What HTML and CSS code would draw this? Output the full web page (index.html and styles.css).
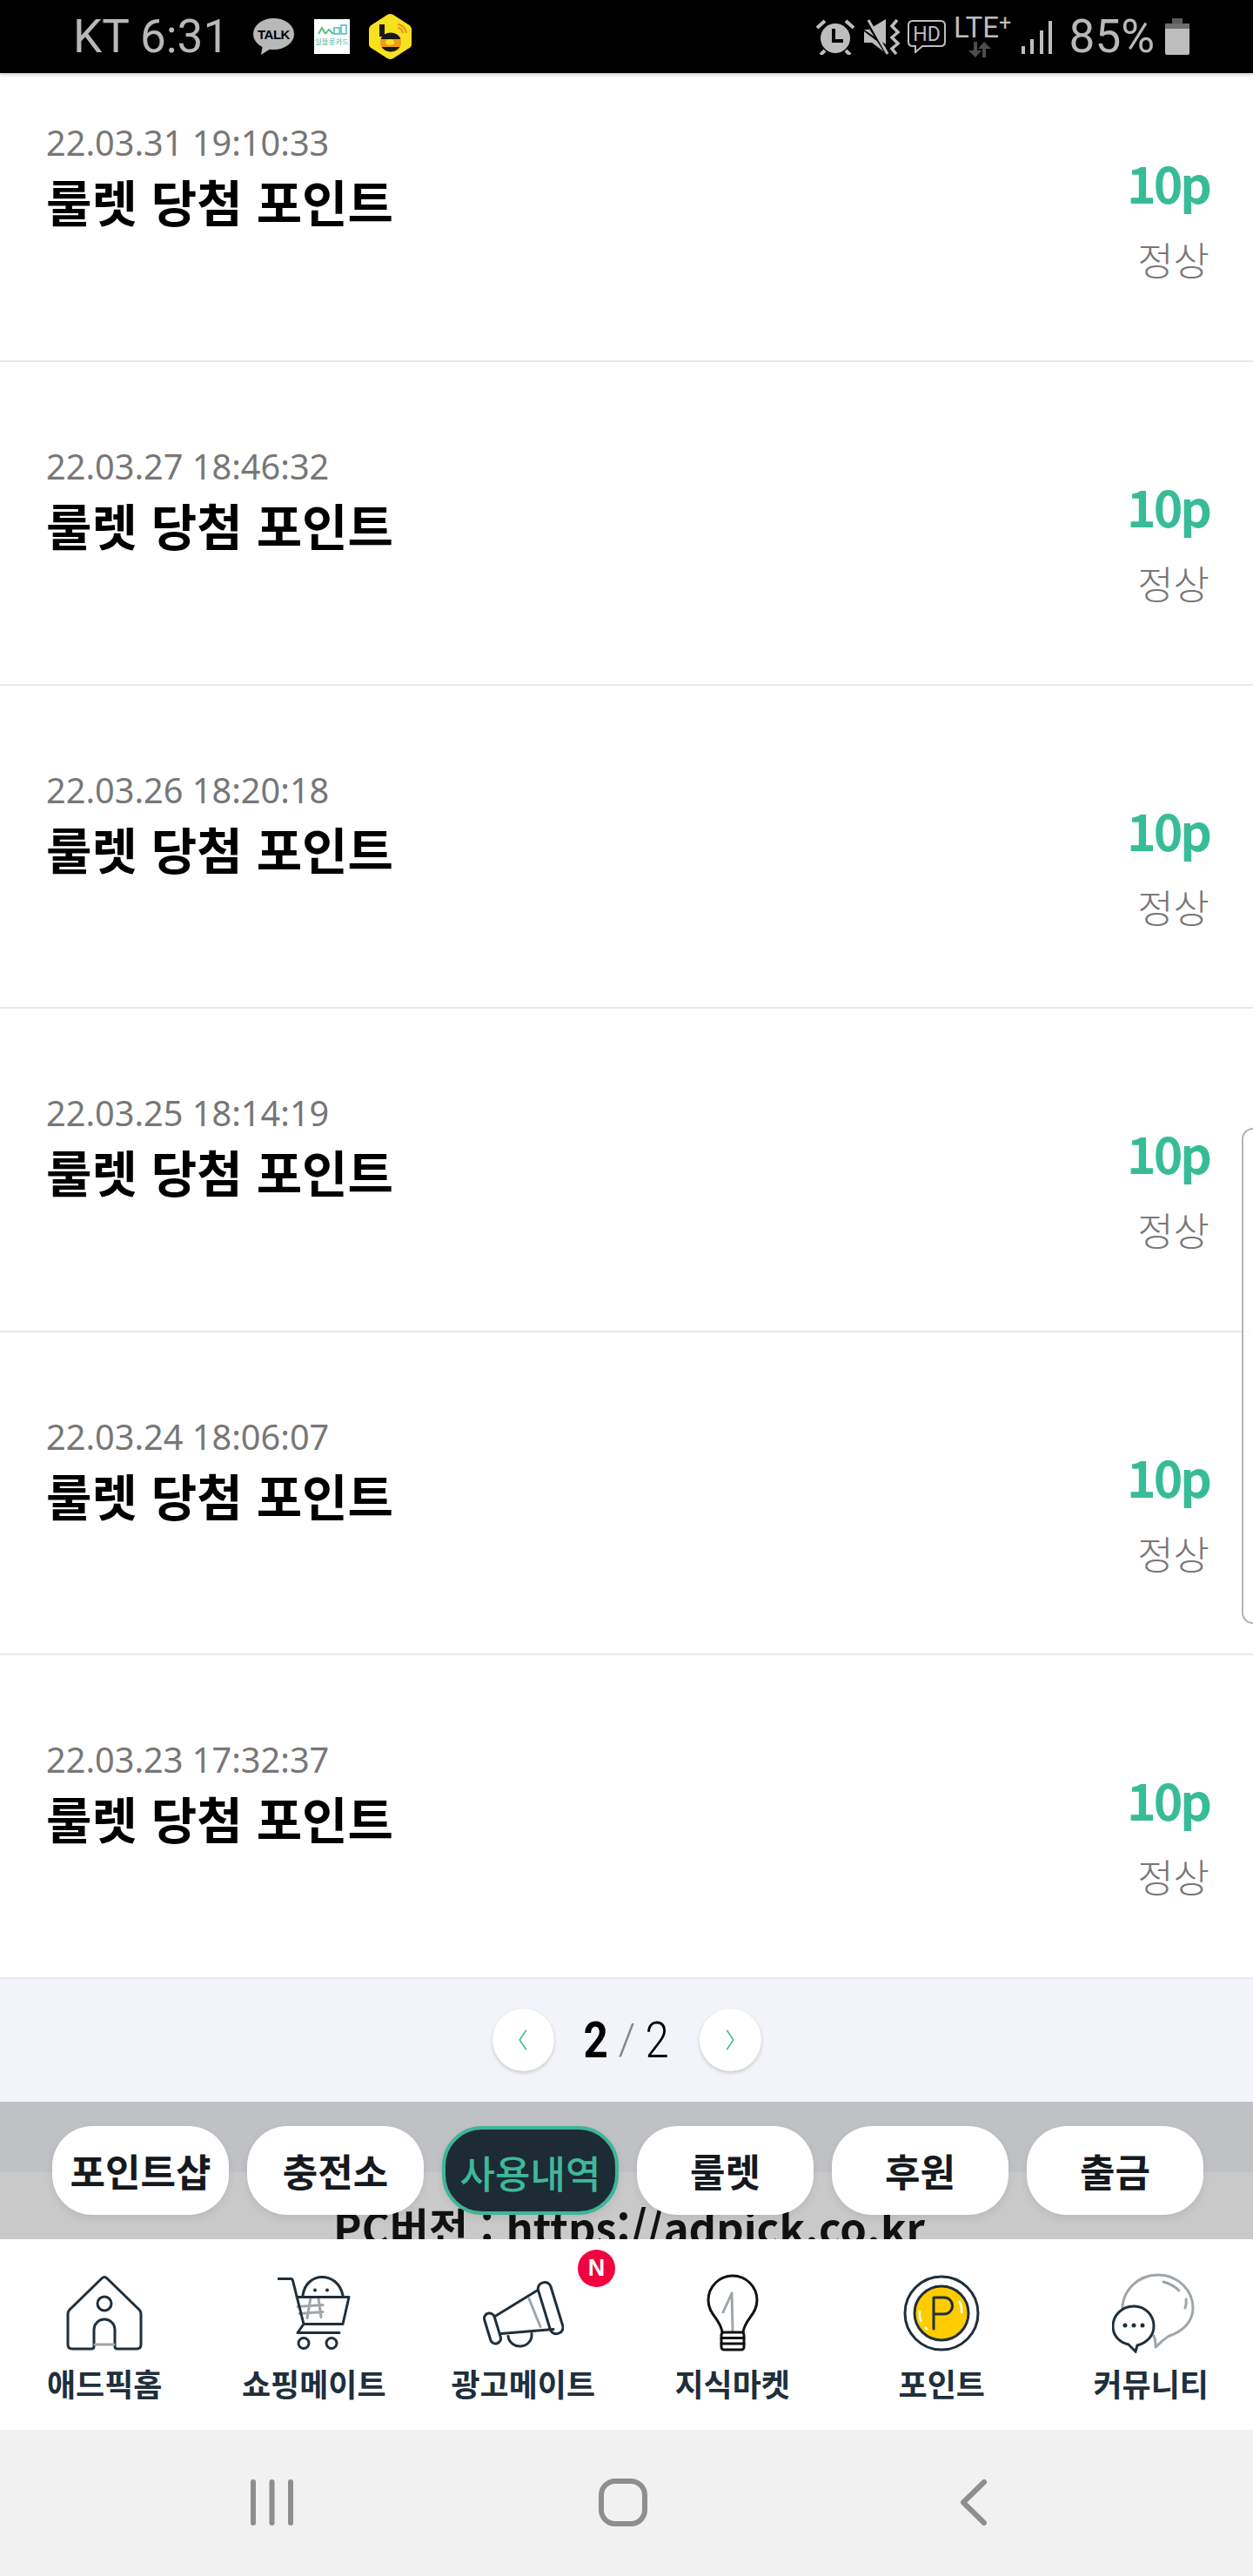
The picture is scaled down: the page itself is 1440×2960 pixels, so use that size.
FILE: index.html
```html
<!DOCTYPE html>
<html lang="ko">
<head>
    <meta charset="UTF-8">
    <meta name="viewport" content="width=device-width, initial-scale=1.0">
    <title>포인트 사용내역</title>
    <link rel="stylesheet" href="styles.css">
</head>
<body>
<div class="screen">

    <!-- 상태바 -->
    <div class="status-bar">
        <div class="status-left">
            <span class="status-text">KT 6:31</span>
            <svg class="ic-talk" viewBox="0 0 47 42" width="47" height="42">
                <ellipse cx="23.5" cy="18" rx="23.5" ry="18" fill="#b8b8b8"/>
                <path d="M11 30 L9 42 L23 33Z" fill="#b8b8b8"/>
                <text x="23.5" y="24" class="talk-text">TALK</text>
            </svg>
            <svg class="ic-card" viewBox="0 0 41 40" width="41" height="40">
                <rect width="41" height="40" fill="#fff"/>
                <path d="M5 17 L9 10 L13 17 M13 17 L17 12 L22 17" fill="none" stroke="#5cbf7d" stroke-width="2"/>
                <rect x="23" y="10" width="6" height="7" fill="none" stroke="#4cb7c4" stroke-width="1.5"/>
                <rect x="31" y="7" width="6" height="10" fill="none" stroke="#4cb7c4" stroke-width="1.5"/>
                <text x="20.5" y="29" class="card-text">일뜰콩카드</text>
            </svg>
            <svg class="ic-bee" viewBox="0 0 49 54" width="49" height="54">
                <path d="M24.5 1 Q26 1 28 2 L45 13 Q49 15 49 19 V36 Q49 39 45 41 L28 52 Q24.5 54 21 52 L4 41 Q0 39 0 36 V19 Q0 15 4 13 L21 2 Q23 1 24.5 1Z" fill="#f8e11f"/>
                <rect x="12" y="13" width="6" height="14" fill="#1a1a1a"/>
                <ellipse cx="25" cy="34" rx="12" ry="10.500" fill="#f09a1c"/>
                <path d="M13.500 30 A12 10.500 0 0 1 36.500 30Z M14.500 39 A12 10.500 0 0 0 35.500 39Z" fill="#1a1a1a"/>
                <ellipse cx="24" cy="33.500" rx="5" ry="3.500" fill="#f8e11f"/>
                <path d="M33 17 A7 7 0 0 1 39 23 M33 13 A11 11 0 0 1 43 23" fill="none" stroke="#ef8a1e" stroke-width="2"/>
            </svg>
        </div>
        <div class="status-right">
            <svg class="ic-alarm" viewBox="0 0 46 42" width="46" height="42">
                <circle cx="23" cy="23" r="17" fill="#bdbdbd"/>
                <path d="M2 11 L11 3 M44 11 L35 3 M11 37 L6 42 M35 37 L40 42" stroke="#bdbdbd" stroke-width="4"/>
                <path d="M21 12 V26 H32" fill="none" stroke="#000" stroke-width="4"/>
            </svg>
            <svg class="ic-mute" viewBox="0 0 42 42" width="42" height="42">
                <path d="M0 13 H5 L25 1 V30Z M0 15 V28 H9 L25 40 V34Z" fill="#bdbdbd"/>
                <path d="M2 3 L26 41" stroke="#000" stroke-width="3"/>
                <path d="M5 2 L27 41" stroke="#bdbdbd" stroke-width="3"/>
                <path d="M38 2 L32 9 L39 16 L32 22 L39 29 L32 35 L37 41" fill="none" stroke="#bdbdbd" stroke-width="3.5"/>
            </svg>
            <svg class="ic-hd" viewBox="0 0 44 38" width="44" height="38">
                <path d="M6 1 H38 Q43 1 43 6 V25 Q43 30 38 30 H17 L9 37 V30 H6 Q1 30 1 25 V6 Q1 1 6 1Z" fill="none" stroke="#bdbdbd" stroke-width="2"/>
                <text x="22" y="24" class="hd-text">HD</text>
            </svg>
            <div class="lte">
                <span class="lte-text">LTE<i>+</i></span>
                <svg viewBox="0 0 26 18" width="26" height="18">
                    <path d="M6 0 H10 V10 H15 L8 18 L0 10 H6Z" fill="#4c4c4c"/>
                    <path d="M16 18 H20 V8 H26 L18 0 L11 8 H16Z" fill="#4c4c4c"/>
                </svg>
            </div>
            <svg class="ic-signal" viewBox="0 0 35 39" width="35" height="39">
                <path d="M2 30 V39 M12 22 V39 M23 12 V39 M33 1 V39" stroke="#bdbdbd" stroke-width="4"/>
            </svg>
            <span class="status-text status-pct">85%</span>
            <svg class="ic-battery" viewBox="0 0 28 42" width="28" height="42">
                <path d="M8 0 H20 V6 H8Z" fill="#5a5a5a"/>
                <rect y="6" width="28" height="6" fill="#6e6e6e"/>
                <path d="M0 12 H28 V40 Q28 42 26 42 H2 Q0 42 0 40Z" fill="#bdbdbd"/>
            </svg>
        </div>
    </div>

    <!-- 포인트 내역 -->
    <ul class="history">
        <li class="row row-first">
            <div class="row-info"><p class="row-date">22.03.31 19:10:33</p><p class="row-title">룰렛 당첨 포인트</p></div>
            <div class="row-side"><p class="row-point">10p</p><p class="row-state">정상</p></div>
        </li>
        <li class="row">
            <div class="row-info"><p class="row-date">22.03.27 18:46:32</p><p class="row-title">룰렛 당첨 포인트</p></div>
            <div class="row-side"><p class="row-point">10p</p><p class="row-state">정상</p></div>
        </li>
        <li class="row">
            <div class="row-info"><p class="row-date">22.03.26 18:20:18</p><p class="row-title">룰렛 당첨 포인트</p></div>
            <div class="row-side"><p class="row-point">10p</p><p class="row-state">정상</p></div>
        </li>
        <li class="row">
            <div class="row-info"><p class="row-date">22.03.25 18:14:19</p><p class="row-title">룰렛 당첨 포인트</p></div>
            <div class="row-side"><p class="row-point">10p</p><p class="row-state">정상</p></div>
        </li>
        <li class="row">
            <div class="row-info"><p class="row-date">22.03.24 18:06:07</p><p class="row-title">룰렛 당첨 포인트</p></div>
            <div class="row-side"><p class="row-point">10p</p><p class="row-state">정상</p></div>
        </li>
        <li class="row">
            <div class="row-info"><p class="row-date">22.03.23 17:32:37</p><p class="row-title">룰렛 당첨 포인트</p></div>
            <div class="row-side"><p class="row-point">10p</p><p class="row-state">정상</p></div>
        </li>
    </ul>

    <!-- 페이지 이동 -->
    <div class="pager">
        <a class="pager-btn">
            <svg viewBox="0 0 14 32" width="12" height="24"><path d="M12 1 L2 16 L12 31" fill="none" stroke="#3fb999" stroke-width="2"/></svg>
        </a>
        <div class="pager-num"><b>2</b><i>/</i><span>2</span></div>
        <a class="pager-btn">
            <svg viewBox="0 0 14 32" width="12" height="24"><path d="M2 1 L12 16 L2 31" fill="none" stroke="#3fb999" stroke-width="2"/></svg>
        </a>
    </div>

    <!-- 탭 -->
    <div class="tab-strip">
        <div class="tab-band"></div>
        <div class="tab-notice">PC버전 : https://adpick.co.kr</div>
        <div class="tabs">
            <a class="tab">포인트샵</a>
            <a class="tab">충전소</a>
            <a class="tab tab-on">사용내역</a>
            <a class="tab">룰렛</a>
            <a class="tab">후원</a>
            <a class="tab">출금</a>
        </div>
    </div>

    <!-- 하단 메뉴 -->
    <nav class="menu">
        <a class="menu-item">
            <svg viewBox="0 0 88 86" width="88" height="86">
                <path d="M2 44 Q2 41 4 39 L41 3 Q44 0 47 3 L84 39 Q86 41 86 44 V79 Q86 84 81 84 H59 Q56 84 56 81 V62 A12 12 0 0 0 32 62 V81 Q32 84 29 84 H7 Q2 84 2 79Z" class="line"/>
                <circle cx="44" cy="32" r="8" class="line"/>
                <path d="M33 79 H55" class="line-gray"/>
            </svg>
            <span>애드픽홈</span>
        </a>
        <a class="menu-item">
            <svg viewBox="0 0 84 85" width="84" height="85">
                <path d="M29 22 C31 8 41 1 51 1 C62 1 72 8 75 22" class="line"/>
                <path d="M23 35 L52 33 M25 43 L52 41 M38 25 L34 48 M47 25 L50 47" class="line-gray"/>
                <path d="M1 3 H15 Q17 3 17.500 5 L30 55 H75 L82 24 H22 M30 55 L23 65 H71" class="line"/>
                <circle cx="43" cy="16" r="2" fill="#1f2f3b"/>
                <circle cx="57" cy="16" r="2" fill="#1f2f3b"/>
                <circle cx="30" cy="77" r="6" class="line"/>
                <circle cx="62" cy="77" r="6" class="line"/>
            </svg>
            <span>쇼핑메이트</span>
        </a>
        <a class="menu-item">
            <span class="badge">N</span>
            <svg viewBox="0 0 93 75" width="93" height="75">
                <path d="M14 41 L63 11 M21 61 L81 56" class="line"/>
                <path d="M29 64 A13.500 13 0 0 0 56 61" class="line"/>
                <path d="M53 21 L66 53" class="line-gray"/>
                <rect x="5" y="37" width="12" height="36" rx="6" transform="rotate(-17 11 55)" class="line"/>
                <rect x="70" y="1" width="15" height="61" rx="7" transform="rotate(-17 78 31)" class="line"/>
            </svg>
            <span>광고메이트</span>
        </a>
        <a class="menu-item">
            <svg viewBox="0 0 60 88" width="60" height="88">
                <path d="M30 65 L29 21 L19 43" class="line-gray"/>
                <path d="M18 66 C16 50 2 46 2 29 A28 28 0 0 1 58 29 C58 46 44 50 42 66" class="line-dark"/>
                <rect x="17" y="66" width="26" height="20" rx="3" class="line-dark"/>
                <path d="M17 72.500 H43 M17 79 H43" class="line-dark"/>
            </svg>
            <span>지식마켓</span>
        </a>
        <a class="menu-item">
            <svg viewBox="0 0 88 88" width="88" height="88">
                <circle cx="44" cy="44" r="42" class="line"/>
                <circle cx="44" cy="44" r="31" fill="#fc0" stroke="#1f2f3b" stroke-width="3"/>
                <path d="M35 62 V26 H47 A9.500 9.500 0 0 1 47 45 H35" class="line"/>
                <path d="M64 30 Q68 36 67 44 M19 41 Q18 48 21 54 M25 60 L28 63" fill="none" stroke="#fff" stroke-width="2.500"/>
            </svg>
            <span>포인트</span>
        </a>
        <a class="menu-item">
            <svg class="ic-chat" viewBox="0 0 95 92" width="95" height="92">
                <path d="M12 46 C10 20 30 2 53 2 C76 2 93 20 93 40 C93 58 78 68 66 72 C60 75 56 80 50 85 C50 80 50 76 48 72" class="line-gray"/>
                <path d="M59 10 Q70 13 77 20 M85 30 Q86 35 84 40" class="line-gray"/>
                <path d="M25 38 C12 38 1 48 1 61 C1 73 10 80 19 82 L27 90 L29 83 C40 80 48 72 48 61 C48 48 38 38 25 38Z" fill="#fff" stroke="#1f2f3b" stroke-width="3"/>
                <circle cx="15" cy="60" r="2.500" fill="#1f2f3b"/>
                <circle cx="25" cy="60" r="2.500" fill="#1f2f3b"/>
                <circle cx="35" cy="60" r="2.500" fill="#1f2f3b"/>
            </svg>
            <span>커뮤니티</span>
        </a>
    </nav>

    <!-- 시스템 버튼 -->
    <div class="sys-nav">
        <svg viewBox="0 0 49 53" width="49" height="53">
            <path d="M3 3 V50 M24.500 3 V50 M46 3 V50" stroke="#8e8e8e" stroke-width="6" stroke-linecap="round"/>
        </svg>
        <svg viewBox="0 0 56 55" width="56" height="55">
            <rect x="3" y="3" width="50" height="49" rx="16" fill="none" stroke="#8e8e8e" stroke-width="6"/>
        </svg>
        <svg viewBox="0 0 30 53" width="30" height="53">
            <path d="M27 3 L3 26.500 L27 50" fill="none" stroke="#8e8e8e" stroke-width="6" stroke-linecap="round" stroke-linejoin="round"/>
        </svg>
    </div>

    <!-- 오른쪽 엣지 패널 -->
    <div class="edge-handle"></div>
</div>
</body>
</html>
```

FILE: styles.css
```css
*{
    list-style-type: none;
    box-sizing: border-box;
    margin:0;
    padding:0;
}
body{
    background:#fff;
    font-family:"Noto Sans CJK KR","Noto Sans",sans-serif;
}
i{
    font-style:normal;
}
.screen{
    position:relative;
    width:1440px;
    height:2960px;
    overflow:hidden;
    display:flex;
    flex-direction:column;
}

/* status bar */
.status-bar{
    position:relative;
    z-index:2;
    height:84px;
    flex:none;
    background:#000;
    box-shadow:0 2px 4px rgba(0,0,0,.2);
    display:flex;
    justify-content:space-between;
    align-items:center;
    padding:0 73px 0 84px;
}
.status-left,
.status-right{
    display:flex;
    align-items:center;
}
.status-text{
    font-family:Roboto,sans-serif;
    font-size:53px;
    font-weight:400;
    line-height:50px;
    color:#b8b8b8;
}
.ic-talk{margin-left:28px;}
.ic-card{margin-left:23px;}
.ic-bee{margin-left:22px;}
.ic-mute{margin-left:10px;}
.ic-hd{margin-left:8px;}
.ic-signal{margin-left:11px;}
.status-pct{margin-left:20px;}
.ic-battery{margin-left:12px;}
.talk-text{
    font-family:"Liberation Sans",sans-serif;
    font-size:15px;
    font-weight:700;
    letter-spacing:-.5px;
    text-anchor:middle;
    fill:#000;
}
.card-text{
    font-size:8.5px;
    text-anchor:middle;
    fill:#4cb9a0;
}
.hd-text{
    font-family:Roboto,sans-serif;
    font-size:23px;
    text-anchor:middle;
    fill:#bdbdbd;
}
.lte{
    margin-left:9px;
    width:67px;
    display:flex;
    flex-direction:column;
    align-items:center;
}
.lte svg{
    margin-right:6px;
}
.lte-text{
    font-family:Roboto,sans-serif;
    font-size:33px;
    line-height:26px;
    color:#bdbdbd;
    white-space:nowrap;
}
.lte-text i{
    font-size:25px;
    position:relative;
    top:-8px;
}

/* list */
.history{
    flex:none;
}
.row{
    height:371.6px;
    padding:95px 50px 0 53px;
    border-bottom:2px solid #e8e9ed;
    display:flex;
    justify-content:space-between;
    align-items:flex-start;
    white-space:nowrap;
}
.row-first{
    height:332px;
    padding-top:55px;
}
.row-date{
    font-family:"Noto Sans",sans-serif;
    font-size:39.7px;
    font-weight:400;
    line-height:50px;
    color:#777;
}
.row-title{
    margin-top:10px;
    font-size:57px;
    font-weight:700;
    line-height:62px;
    color:#000;
}
.row-side{
    text-align:right;
}
.row-point{
    margin-top:35px;
    font-size:57px;
    font-weight:700;
    line-height:70px;
    letter-spacing:-3px;
    color:#38bc98;
}
.row-state{
    margin-top:28px;
    font-size:45px;
    font-weight:300;
    line-height:52px;
    color:#777;
}

/* pager */
.pager{
    height:141px;
    flex:none;
    background:#f2f4f9;
    display:flex;
    justify-content:center;
    align-items:center;
}
.pager-btn{
    width:71px;
    height:72px;
    border-radius:50%;
    background:#fff;
    box-shadow:0 2px 4px rgba(0,0,0,.18);
    display:flex;
    align-items:center;
    justify-content:center;
}
.pager-num{
    width:167px;
    display:flex;
    justify-content:center;
    align-items:center;
    gap:9px;
    font-family:Roboto,sans-serif;
    font-size:58px;
    line-height:70px;
    color:#000;
}
.pager-num b,
.pager-num span{
    display:inline-block;
    transform:scaleX(.85);
}
.pager-num b{
    font-weight:700;
}
.pager-num span{
    font-weight:300;
}
.pager-num i{
    font-size:50px;
    font-weight:300;
    color:#888;
}

/* tabs */
.tab-strip{
    position:relative;
    height:158px;
    flex:none;
    overflow:hidden;
    background:#c9c9c9;
}
.tab-band{
    height:81px;
    background:#c0c1c5;
}
.tab-notice{
    text-align:center;
    font-size:49px;
    font-weight:700;
    line-height:70px;
    color:#111;
    white-space:nowrap;
    margin:27px 0 0 6px;
}
.tabs{
    position:absolute;
    top:28px;
    left:60px;
    display:flex;
    gap:21px;
}
.tab{
    width:203px;
    height:102px;
    border-radius:46px;
    background:#fff;
    box-shadow:0 4px 10px rgba(0,0,0,.08);
    display:flex;
    align-items:center;
    justify-content:center;
    font-size:44px;
    font-weight:700;
    color:#15191e;
    white-space:nowrap;
}
.tab-on{
    background:#1d2b35;
    border:4px solid #3fb597;
    color:#3fb898;
    font-weight:500;
    padding-top:4px;
}

/* bottom menu */
.menu{
    height:219px;
    flex:none;
    background:#fff;
    display:grid;
    grid-template-columns:repeat(6,240.5px);
}
.menu-item{
    position:relative;
    height:100%;
    padding-top:39px;
    display:flex;
    flex-direction:column;
    align-items:center;
}
.menu-item svg{
    height:92px;
    flex:none;
}
.menu-item .ic-chat{
    margin-left:6px;
}
.menu-item span{
    margin-top:9px;
    font-size:36px;
    font-weight:700;
    line-height:50px;
    color:#1f2f3b;
    white-space:nowrap;
}
.menu-item .badge{
    position:absolute;
    top:12px;
    left:183px;
    width:43px;
    height:43px;
    margin:0;
    border-radius:50%;
    background:#f0033e;
    color:#fff;
    font-family:"Liberation Sans",sans-serif;
    font-size:27px;
    font-weight:700;
    line-height:43px;
    text-align:center;
}
.line,
.line-gray,
.line-dark{
    fill:none;
    stroke-width:3;
    stroke-linecap:round;
    stroke-linejoin:round;
}
.line{stroke:#1f2f3b;}
.line-gray{stroke:#9fa6aa;}
.line-dark{stroke:#111;}

/* android nav */
.sys-nav{
    height:168px;
    flex:none;
    background:#f1f1f1;
    display:flex;
    align-items:center;
    padding-left:288px;
}
.sys-nav svg:nth-child(2){
    margin-left:351px;
}
.sys-nav svg:nth-child(3){
    margin-left:360px;
}

.edge-handle{
    position:absolute;
    top:1296px;
    right:0;
    width:13px;
    height:570px;
    border:2px solid #b4b4b4;
    border-right:none;
    border-radius:14px 0 0 14px;
    background:rgba(255,255,255,.75);
}
```
